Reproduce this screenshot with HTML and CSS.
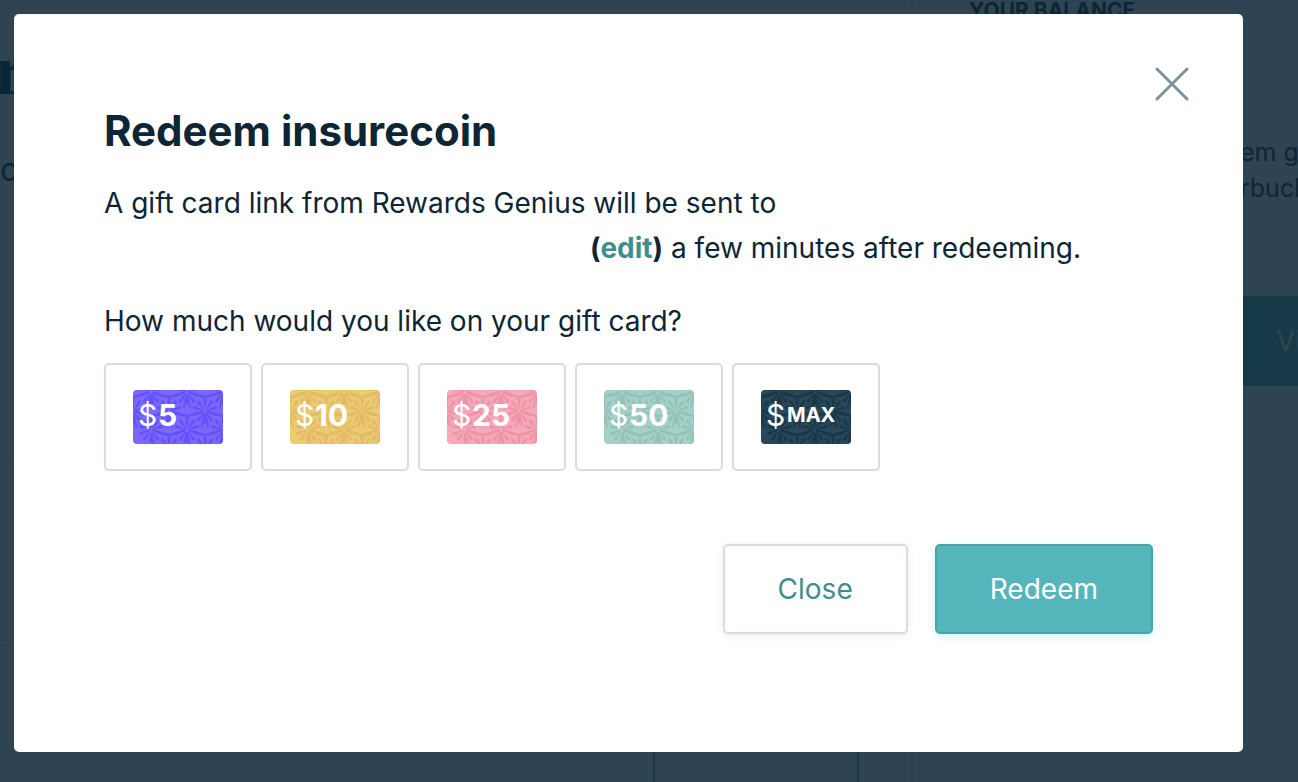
FILE: index.html
```html
<!DOCTYPE html>
<html lang="en">
<head>
  <meta charset="UTF-8" />
  <meta name="viewport" content="width=device-width, initial-scale=1.0"/>
  <title>Redeem insurecoin</title>
  <link rel="stylesheet" href="styles.css">
</head>
<body>
  <!-- Page behind the dialog -->
  <div class="page">
    <main class="main">
      <div class="intro">
        <h1>r</h1>
        <p>c</p>
      </div>
      <div class="row"></div>
      <div class="columns">
        <div></div>
        <div></div>
        <div></div>
      </div>
    </main>
    <aside class="sidebar">
      <h2>YOUR BALANCE</h2>
      <p>em g<br>rbuck</p>
      <a class="view-button" href="#">Vi</a>
    </aside>
  </div>

  <!-- Redeem dialog -->
  <div class="overlay">
    <div class="modal" role="dialog" aria-labelledby="modal-title">
      <button type="button" class="dismiss" aria-label="Dismiss">
        <svg viewBox="0 0 34 34" width="34" height="34"><path d="M2 2L32 32M32 2L2 32"/></svg>
      </button>
      <h2 class="title" id="modal-title">Redeem insurecoin</h2>
      <p class="text">A gift card link from Rewards Genius will be sent to<br><span class="email"></span><b>(<a href="#">edit</a>)</b> a few minutes after redeeming.</p>
      <p class="text question">How much would you like on your gift card?</p>

      <!-- Shared burst pattern, coloured by each card -->
      <svg class="defs" width="0" height="0" aria-hidden="true">
        <defs>
          <g id="burst">
            <path id="ray" d="M-0.3 -2L-1.5 -11Q0 -15 1.5 -11L0.3 -2Z"/>
            <use href="#ray" transform="rotate(36)"/>
            <use href="#ray" transform="rotate(72)"/>
            <use href="#ray" transform="rotate(108)"/>
            <use href="#ray" transform="rotate(144)"/>
            <use href="#ray" transform="rotate(180)"/>
            <use href="#ray" transform="rotate(216)"/>
            <use href="#ray" transform="rotate(252)"/>
            <use href="#ray" transform="rotate(288)"/>
            <use href="#ray" transform="rotate(324)"/>
            <path d="M-17 -20L0 -15L17 -20L16 -17.5L0 -12.5L-16 -17.5Z"/>
            <path d="M-17 -18L-14 -4L-15 -1L-18 -14ZM17 -18L14 -4L15 -1L18 -14Z"/>
          </g>
          <g id="art">
            <use href="#burst" x="18" y="2"/>
            <use href="#burst" x="54" y="2"/>
            <use href="#burst" x="90" y="2"/>
            <use href="#burst" x="0" y="21"/>
            <use href="#burst" x="36" y="21"/>
            <use href="#burst" x="72" y="21"/>
            <use href="#burst" x="18" y="40"/>
            <use href="#burst" x="54" y="40"/>
            <use href="#burst" x="90" y="40"/>
            <use href="#burst" x="36" y="59"/>
            <use href="#burst" x="72" y="59"/>
          </g>
        </defs>
      </svg>

      <div class="amounts">
        <button type="button" class="amount">
          <svg class="card purple" viewBox="0 0 90 54"><use href="#art"/><text class="sign" x="5" y="36">$</text><text class="value" x="25" y="36">5</text></svg>
        </button>
        <button type="button" class="amount">
          <svg class="card yellow" viewBox="0 0 90 54"><use href="#art"/><text class="sign" x="5" y="36">$</text><text class="value" x="25" y="36">10</text></svg>
        </button>
        <button type="button" class="amount">
          <svg class="card pink" viewBox="0 0 90 54"><use href="#art"/><text class="sign" x="5" y="36">$</text><text class="value" x="25" y="36">25</text></svg>
        </button>
        <button type="button" class="amount">
          <svg class="card green" viewBox="0 0 90 54"><use href="#art"/><text class="sign" x="5" y="36">$</text><text class="value" x="25" y="36">50</text></svg>
        </button>
        <button type="button" class="amount">
          <svg class="card navy" viewBox="0 0 90 54"><use href="#art"/><text class="sign" x="5" y="36">$</text><text class="value max" x="26" y="32">MAX</text></svg>
        </button>
      </div>

      <div class="actions">
        <button type="button" class="button">Close</button>
        <button type="button" class="button primary">Redeem</button>
      </div>
    </div>
  </div>
</body>
</html>
```
FILE: styles.css
```css
* {
  margin: 0;
  padding: 0;
  box-sizing: border-box;
}
html, body {
  height: 100%;
}
body {
  font-family: Inter, "Liberation Sans", sans-serif;
  font-size: 28px;
  color: #0d2535;
  overflow: hidden;
}
button {
  font: inherit;
  cursor: pointer;
}

/* Page */
.page {
  display: grid;
  grid-template-columns: 1fr 385px;
  height: 100%;
}
.main {
  display: flex;
  flex-direction: column;
  border-right: 2px solid #eef0f1;
  overflow: hidden;
}
.intro {
  height: 456px;
  padding-top: 34px;
}
.intro h1 {
  font: bold 72px/72px "Liberation Serif", serif;
  text-indent: -6px;
}
.intro p {
  margin-top: 44px;
  font-size: 32px;
  line-height: 40px;
}
.row {
  height: 190px;
  border-top: 2px solid #eef0f1;
  border-bottom: 2px solid #eef0f1;
}
.columns {
  flex: 1;
  display: grid;
  grid-template-columns: 655px 204px 1fr;
}
.columns div {
  border-right: 2px solid #54b6ba;
}
.columns div:last-child {
  border: none;
}
.sidebar {
  padding-left: 56px;
  overflow: hidden;
  white-space: nowrap;
}
.sidebar h2 {
  font-size: 21px;
  line-height: 22px;
}
.sidebar p {
  margin: 112px 0 90px;
  padding-left: 271px;
  font-size: 25px;
  line-height: 36px;
}
.view-button {
  display: block;
  padding-left: 307px;
  line-height: 90px;
  background: #54b6ba;
  color: #fff;
  text-decoration: none;
}

/* Dialog */
.overlay {
  position: fixed;
  inset: 0;
  padding: 14px 55px 31px 14px;
  background: rgba(13, 37, 53, 0.86);
}
.modal {
  position: relative;
  padding: 91px 90px 118px;
  background: #fff;
  border-radius: 5px;
}
.dismiss {
  position: absolute;
  top: 53px;
  right: 54px;
  width: 34px;
  height: 34px;
  border: none;
  background: none;
}
.dismiss svg {
  display: block;
  fill: none;
  stroke: #7f929c;
  stroke-width: 3;
  stroke-linecap: round;
}
.title {
  margin-bottom: 24px;
  font-size: 42px;
  line-height: 52px;
}
.text {
  line-height: 45px;
}
.email {
  display: inline-block;
  width: 486px;
}
.text a {
  color: #3f8e8e;
  text-decoration: none;
}
.question {
  margin: 28px 0 19px;
}
.defs {
  position: absolute;
}
.amounts {
  display: flex;
  gap: 9px;
}
.amount {
  width: 148px;
  height: 108px;
  border: 2px solid #d8dddf;
  border-radius: 5px;
  background: #fff;
}
.card {
  display: block;
  width: 90px;
  height: 54px;
  margin: 0 auto;
  border-radius: 4px;
}
.card text {
  fill: #fff;
}
.sign {
  font-size: 30px;
  font-weight: 400;
}
.value {
  font-size: 30px;
  font-weight: 700;
}
.max {
  font-size: 20px;
}
.purple {
  background: #7b68fb;
  fill: #6450fa;
}
.yellow {
  background: #ebca74;
  fill: #e4b962;
}
.pink {
  background: #f3a9b8;
  fill: #ef92a5;
}
.green {
  background: #a4d1c7;
  fill: #93c1b8;
}
.navy {
  background: #294757;
  fill: #18374a;
}
.actions {
  display: flex;
  justify-content: flex-end;
  gap: 27px;
  margin-top: 73px;
}
.button {
  height: 90px;
  padding: 0 53px;
  border: 2px solid #d8dddf;
  border-radius: 5px;
  background: #fff;
  color: #3f8e8e;
  box-shadow: 0 2px 8px rgba(13, 37, 53, 0.08);
}
.primary {
  border-color: #48a4a7;
  background: #54b6ba;
  color: #fff;
  box-shadow: 0 2px 8px rgba(84, 220, 225, 0.25);
}
```
